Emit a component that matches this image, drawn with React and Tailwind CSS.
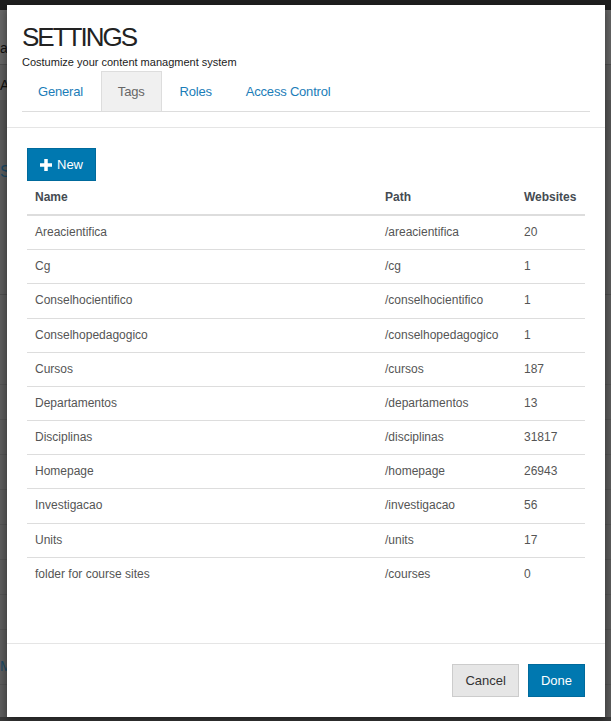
const tags = [
	{ name: 'Areacientifica', path: '/areacientifica', sites: '20' },
	{ name: 'Cg', path: '/cg', sites: '1' },
	{ name: 'Conselhocientifico', path: '/conselhocientifico', sites: '1' },
	{ name: 'Conselhopedagogico', path: '/conselhopedagogico', sites: '1' },
	{ name: 'Cursos', path: '/cursos', sites: '187' },
	{ name: 'Departamentos', path: '/departamentos', sites: '13' },
	{ name: 'Disciplinas', path: '/disciplinas', sites: '31817' },
	{ name: 'Homepage', path: '/homepage', sites: '26943' },
	{ name: 'Investigacao', path: '/investigacao', sites: '56' },
	{ name: 'Units', path: '/units', sites: '17' },
	{ name: 'folder for course sites', path: '/courses', sites: '0' },
]

const tabs = ['General', 'Tags', 'Roles', 'Access Control']

function PlusIcon() {
	return (
		<svg width="12" height="12" viewBox="0 0 12 12" fill="white">
			<rect x="4.25" y="0" width="3.5" height="12" />
			<rect x="0" y="4.25" width="12" height="3.5" />
		</svg>
	)
}

function Backdrop() {
	// the page behind the modal, already dimmed by the overlay
	return (
		<div className="flex flex-col h-[721px] w-full bg-[#5e5e5e] text-[14px] leading-[20px]">
			<div className="h-[10px] bg-[#1f1f1f]" />
			<div className="h-[55px] bg-[#676767] border-b border-[#505050] flex items-end pb-[6px] text-[#111]">a</div>
			<div className="h-[35px] bg-[#5f5f5f] flex items-center pt-[4px] text-[#111]">Ac</div>
			<div className="h-[40px] bg-[#575757]" />
			<div className="h-[155px] bg-[#5d5d5d] border-b border-[#4f4f4f] pt-[22px] text-[#1b4a66] text-[16px]">Si</div>
			<div className="h-[90px] border-b border-[#555]" />
			{Array.from({ length: 7 }).map((_, i) => (
				<div key={i} className="h-[35px] border-b border-[#555]" />
			))}
			<div className="h-[55px] border-b border-[#555] flex items-end pb-[8px] text-[#1b4a66]">Ma</div>
			<div className="flex-1" />
			<div className="h-[4px] bg-[#3a3a3a]" />
		</div>
	)
}

export default function App() {
	return (
		<div className="relative w-full h-[721px] overflow-hidden" style={{ fontFamily: '"Liberation Sans", Arial, sans-serif' }}>
			<Backdrop />
			<div className="absolute left-[7px] top-[5px] w-[598px] bg-white shadow-[0_3px_9px_rgba(0,0,0,0.5)]">
				<div className="px-[15px] pt-4 pb-[15px] border-b border-[#e5e5e5]">
					<h1 className="text-[26px] leading-[32px] tracking-[-2px] text-[#222]">SETTINGS</h1>
					<p className="mt-[3px] text-[11px] leading-[13px] text-[#222]">Costumize your content managment system</p>
					<ul className="mt-[2px] flex border-b border-[#ddd]">
						{tabs.map(t => (
							<li
								key={t}
								className={
									t === 'Tags'
										? 'mr-[2px] px-4 py-[10px] text-[13px] leading-[19px] tracking-[-0.2px] border border-b-0 border-[#ddd] bg-[#f0f0f0] text-[#666]'
										: 'mr-[2px] px-4 pt-[11px] pb-[10px] text-[13px] leading-[19px] tracking-[-0.2px] text-[#1b7db8]'
								}>
								{t}
							</li>
						))}
					</ul>
				</div>
				<div className="px-5 pt-5 pb-[52px]">
					<button className="flex items-center gap-[5px] h-[33px] pl-3 pr-3 bg-[#0078b0] border border-[#006a9c] text-white text-[13px]">
						<PlusIcon />
						New
					</button>
					<table className="w-full table-fixed text-[12px] leading-[17.15px]">
						<colgroup>
							<col className="w-[350px]" />
							<col className="w-[139px]" />
							<col />
						</colgroup>
						<thead>
							<tr className="border-b-2 border-[#ddd] text-left text-[#454b52]">
								<th className="px-2 py-2 font-bold">Name</th>
								<th className="px-2 py-2 font-bold">Path</th>
								<th className="px-2 py-2 font-bold">Websites</th>
							</tr>
						</thead>
						<tbody className="text-[#555]">
							{tags.map((t, i) => (
								<tr key={t.path} className={i === 0 ? '' : 'border-t border-[#ddd]'}>
									<td className="px-2 py-2">{t.name}</td>
									<td className="px-2 py-2">{t.path}</td>
									<td className="px-2 py-2">{t.sites}</td>
								</tr>
							))}
						</tbody>
					</table>
				</div>
				<div className="flex justify-end gap-[9px] p-5 border-t border-[#e5e5e5]">
					<button className="h-[33px] px-3 bg-[#e6e6e6] border border-[#ccc] text-[#333] text-[13px]">Cancel</button>
					<button className="h-[33px] px-3 bg-[#0078b0] border border-[#006a9c] text-white text-[13px]">Done</button>
				</div>
			</div>
		</div>
	)
}
